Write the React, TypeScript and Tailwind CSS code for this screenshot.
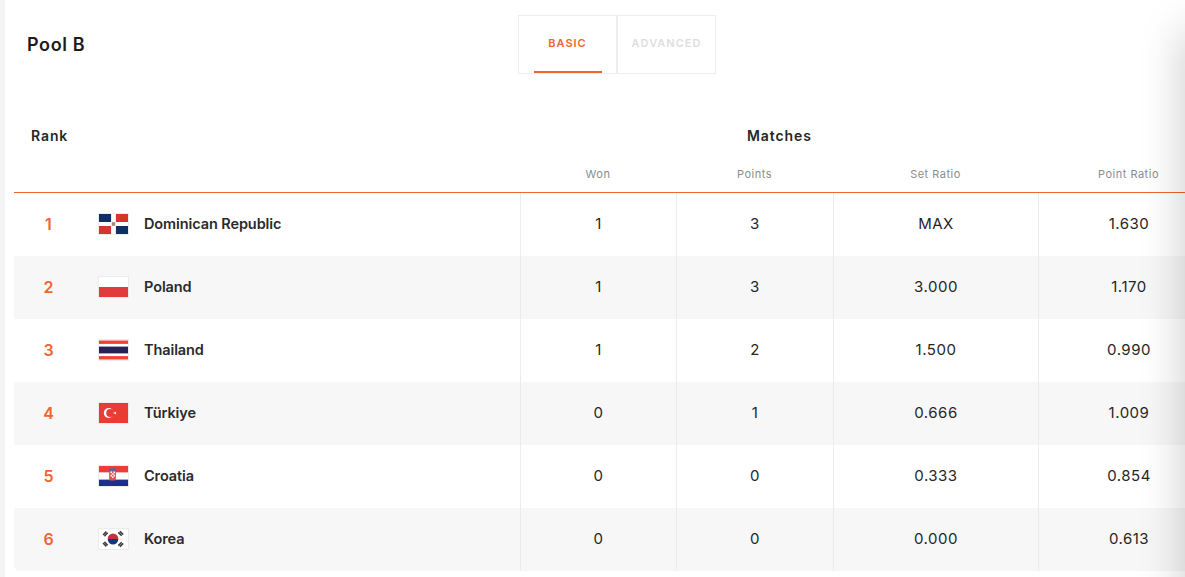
import type { ReactNode } from "react";

interface Team {
  rank: number;
  name: string;
  won: number;
  points: number;
  setRatio: string;
  pointRatio: string;
  flag: ReactNode;
}

const FlagFrame = ({ children }: { children: ReactNode }) => (
  <svg width="31" height="22" viewBox="0 0 32 22" preserveAspectRatio="none" className="block shrink-0">
    {children}
    <rect x="0.5" y="0.5" width="31" height="21" fill="none" stroke="#ececec" />
  </svg>
);

const DominicanFlag = () => (
  <FlagFrame>
    <rect width="32" height="22" fill="#fff" />
    <rect x="1" y="1" width="12.5" height="8" fill="#0f2f66" />
    <rect x="18.5" y="1" width="12.5" height="8" fill="#d5352c" />
    <rect x="1" y="13" width="12.5" height="8" fill="#d5352c" />
    <rect x="18.5" y="13" width="12.5" height="8" fill="#0f2f66" />
    <rect x="14.2" y="9.2" width="3.6" height="3.6" fill="#a08a78" />
  </FlagFrame>
);

const PolandFlag = () => (
  <FlagFrame>
    <rect width="32" height="11" fill="#fff" />
    <rect y="11" width="32" height="11" fill="#e13c3c" />
  </FlagFrame>
);

const ThailandFlag = () => (
  <FlagFrame>
    <rect width="32" height="22" fill="#fff" />
    <rect x="1" y="1.5" width="30" height="3.4" fill="#ef4136" />
    <rect x="1" y="7.6" width="30" height="6.8" fill="#252255" />
    <rect x="1" y="17.1" width="30" height="3.4" fill="#ef4136" />
  </FlagFrame>
);

const TurkeyFlag = () => (
  <FlagFrame>
    <rect width="32" height="22" fill="#e83d33" />
    <circle cx="11" cy="11" r="5" fill="#fff" />
    <circle cx="12.5" cy="11" r="4" fill="#e83d33" />
    <polygon points="15.5,11 19,9.4 18.2,11 19,12.6" fill="#fff" />
  </FlagFrame>
);

const CroatiaFlag = () => (
  <FlagFrame>
    <rect width="32" height="7.6" fill="#ee3d35" />
    <rect y="7.6" width="32" height="7" fill="#fff" />
    <rect y="14.6" width="32" height="7.4" fill="#1e2f8f" />
    <rect x="11.5" y="3.4" width="7" height="2.6" fill="#4a6aa8" />
    <rect x="11.5" y="6" width="7" height="9.5" rx="1.5" fill="#e2504a" />
    <path d="M13 6.6h1.5v1.6H13zM16 6.6h1.5v1.6H16zM14.5 8.2H16v1.6h-1.5zM13 9.8h1.5v1.6H13zM16 9.8h1.5v1.6H16zM14.5 11.4H16V13h-1.5z" fill="#fff" />
  </FlagFrame>
);

const KoreaFlag = () => (
  <FlagFrame>
    <rect width="32" height="22" fill="#fff" />
    <path d="M10 11a5.5 5.5 0 0 1 11 0z" fill="#c8313e" />
    <path d="M10 11a5.5 5.5 0 0 0 11 0z" fill="#12387f" />
    <path d="M5.2 7l3.4-3.4M6.6 8.2L10 4.8" stroke="#3a3a3a" strokeWidth="1.6" />
    <path d="M21 4.4l3.4 3.4M22.6 3.2L26 6.6" stroke="#3a3a3a" strokeWidth="1.6" />
    <path d="M5.2 15l3.4 3.4M6.6 13.8l3.4 3.4" stroke="#3a3a3a" strokeWidth="1.6" />
    <path d="M21 17.6l3.4-3.4M22.6 18.8l3.4-3.4" stroke="#3a3a3a" strokeWidth="1.6" />
  </FlagFrame>
);

const teams: Team[] = [
  { rank: 1, name: "Dominican Republic", won: 1, points: 3, setRatio: "MAX", pointRatio: "1.630", flag: <DominicanFlag /> },
  { rank: 2, name: "Poland", won: 1, points: 3, setRatio: "3.000", pointRatio: "1.170", flag: <PolandFlag /> },
  { rank: 3, name: "Thailand", won: 1, points: 2, setRatio: "1.500", pointRatio: "0.990", flag: <ThailandFlag /> },
  { rank: 4, name: "Türkiye", won: 0, points: 1, setRatio: "0.666", pointRatio: "1.009", flag: <TurkeyFlag /> },
  { rank: 5, name: "Croatia", won: 0, points: 0, setRatio: "0.333", pointRatio: "0.854", flag: <CroatiaFlag /> },
  { rank: 6, name: "Korea", won: 0, points: 0, setRatio: "0.000", pointRatio: "0.613", flag: <KoreaFlag /> },
];

const COLS = "grid grid-cols-[506px_156px_157px_205px_181px]";

export default function App() {
  return (
    <div className="relative h-[577px] w-[1185px] overflow-hidden bg-[#f4f4f4] pl-[5px] font-['Inter',sans-serif] text-[#262626]">
      <div className="h-full overflow-hidden bg-white">
        {/* Title + tabs */}
        <div className="relative flex h-[125px] items-start">
          <h2 className="ml-[22px] mt-[33px] text-[18px] font-semibold leading-6 tracking-[0.6px] text-[#1c1c1c]">Pool B</h2>
          <div className="absolute left-[513px] top-[15px] flex">
            <div className="relative flex h-[59px] w-[99px] justify-center border border-[#eeeeee] pt-[19px] text-[11px] font-semibold leading-4 tracking-[1px] text-[#f26430]">
              BASIC
              <span className="absolute bottom-0 left-[15px] h-[2px] w-[68px] bg-[#f26430]" />
            </div>
            <div className="flex h-[59px] w-[99px] justify-center border border-[#eeeeee] pt-[19px] text-[11px] font-semibold leading-4 tracking-[1px] text-[#dedede]">
              ADVANCED
            </div>
          </div>
        </div>

        <div className="ml-[9px] w-[1205px]">
          {/* Header rows */}
          <div className={`${COLS} h-[21px] items-center text-[14px] font-semibold leading-5 tracking-[0.9px]`}>
            <div className="pl-[17px]">Rank</div>
            <div className="col-span-3 pl-[227px]">Matches</div>
          </div>
          <div className={`${COLS} h-[47px] border-b border-[#f26430] pt-[20px] text-center text-[11px] leading-4 tracking-[0.5px] text-[#8c8c8c]`}>
            <div />
            <div>Won</div>
            <div>Points</div>
            <div>Set Ratio</div>
            <div>Point Ratio</div>
          </div>

          {/* Team rows */}
          {teams.map((team) => (
            <div
              key={team.rank}
              className={`${COLS} h-[63px] items-stretch text-center text-[15px] leading-5 tracking-[0.5px] ${team.rank % 2 === 0 ? "bg-[#f7f7f7]" : "bg-white"} ${team.rank === 6 ? "rounded-bl-[6px]" : ""}`}
            >
              <div className="flex items-center pb-[2px] text-left tracking-normal">
                <span className="w-[84px] pr-[15px] text-center text-[16px] font-semibold text-[#f26430]">{team.rank}</span>
                {team.flag}
                <span className="ml-[15px] text-[14.5px] font-semibold tracking-[-0.1px] text-[#2b2b2b]">{team.name}</span>
              </div>
              <div className="flex items-center justify-center border-l border-[#ececec] pb-[2px]">{team.won}</div>
              <div className="flex items-center justify-center border-l border-[#ececec] pb-[2px]">{team.points}</div>
              <div className="flex items-center justify-center border-l border-[#ececec] pb-[2px]">{team.setRatio}</div>
              <div className="flex items-center justify-center border-l border-[#ececec] pb-[2px]">{team.pointRatio}</div>
            </div>
          ))}
        </div>
      </div>

      {/* Shadow of the panel that lies just off the right edge */}
      <div className="pointer-events-none absolute bottom-[-40px] left-full top-[30px] w-[40px] shadow-[0_0_45px_rgba(0,0,0,0.22)]" />
    </div>
  );
}
